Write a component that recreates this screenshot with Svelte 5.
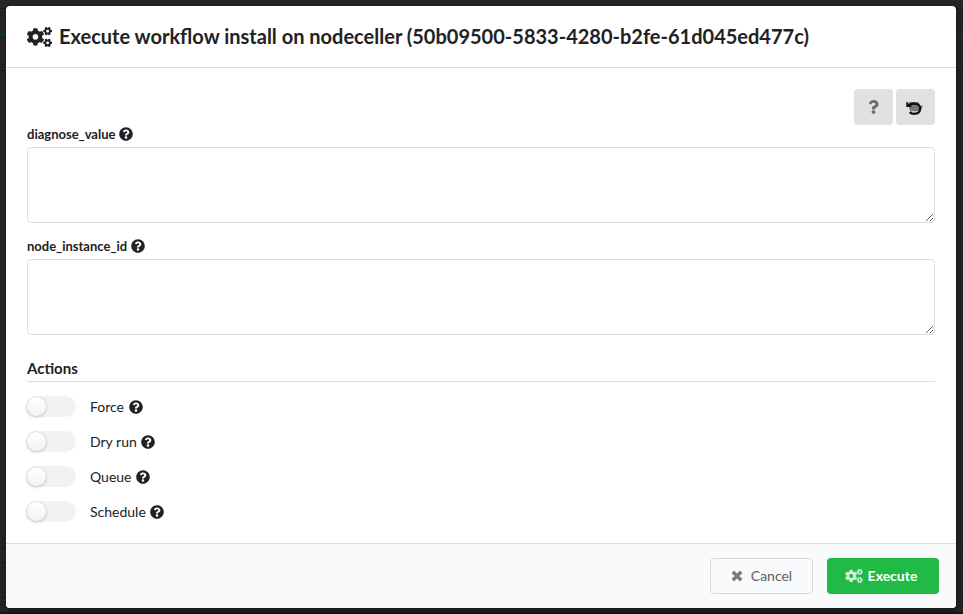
<script>
  const fields = ['diagnose_value', 'node_instance_id'];
  const actions = ['Force', 'Dry run', 'Queue', 'Schedule'];
  const smallGear = 'M512.1 191l-8.2 14.3c-3 5.3-9.4 7.5-15.1 5.4-11.8-4.4-22.6-10.7-32.1-18.6-4.6-3.8-5.8-10.5-2.8-15.7l8.2-14.3c-6.9-8-12.3-17.3-15.9-27.4h-16.5c-6 0-11.2-4.3-12.2-10.3-2-12-2.1-24.6 0-37.1 1-6 6.2-10.4 12.2-10.4h16.5c3.6-10.1 9-19.4 15.9-27.4l-8.2-14.3c-3-5.2-1.9-11.9 2.8-15.7 9.5-7.9 20.4-14.2 32.1-18.6 5.7-2.1 12.1.1 15.1 5.4l8.2 14.3c10.5-1.9 21.2-1.9 31.7 0L552 6.3c3-5.3 9.4-7.5 15.1-5.4 11.8 4.4 22.6 10.7 32.1 18.6 4.6 3.8 5.8 10.5 2.8 15.7l-8.2 14.3c6.9 8 12.3 17.3 15.9 27.4h16.5c6 0 11.2 4.3 12.2 10.3 2 12 2.1 24.6 0 37.1-1 6-6.2 10.4-12.2 10.4h-16.5c-3.6 10.1-9 19.4-15.9 27.4l8.2 14.3c3 5.2 1.9 11.9-2.8 15.7-9.5 7.9-20.4 14.2-32.1 18.6-5.7 2.1-12.1-.1-15.1-5.4l-8.2-14.3c-10.4 1.9-21.2 1.9-31.7 0zm-10.5-58.8c38.5 29.6 82.4-14.3 52.8-52.8-38.5-29.7-82.4 14.3-52.8 52.8z';
  const bigGear = 'M386.3 286.1l33.7 16.8c10.1 5.8 14.5 18.1 10.5 29.1-8.9 24.2-26.4 46.4-42.6 65.8-7.4 8.9-20.2 11.1-30.3 5.3l-29.1-16.8c-16 13.7-34.6 24.6-54.9 31.7v33.6c0 11.6-8.3 21.6-19.7 23.6-24.6 4.2-50.4 4.4-75.9 0-11.5-2-20-11.9-20-23.6V418c-20.3-7.2-38.9-18-54.9-31.7L74 403c-10 5.8-22.9 3.6-30.3-5.3-16.2-19.4-33.3-41.6-42.2-65.7-4-10.9.4-23.2 10.5-29.1l33.3-16.8c-3.9-20.9-3.9-42.4 0-63.4L12 205.8c-10.1-5.8-14.6-18.1-10.5-29 8.9-24.2 26-46.4 42.2-65.8 7.4-8.9 20.2-11.1 30.3-5.3l29.1 16.8c16-13.7 34.6-24.6 54.9-31.7V57.1c0-11.5 8.2-21.5 19.6-23.5 24.6-4.2 50.5-4.4 76-.1 11.5 2 20 11.9 20 23.6v33.6c20.3 7.2 38.9 18 54.9 31.7l29.1-16.8c10-5.8 22.9-3.6 30.3 5.3 16.2 19.4 33.2 41.6 42.1 65.8 4 10.9.1 23.2-10 29.1l-33.7 16.8c3.9 21 3.9 42.5 0 63.5zm-117.6 21.1c59.2-77-28.7-164.9-105.7-105.7-59.2 77 28.7 164.9 105.7 105.7z';
</script>

{#snippet cogs()}
  <svg class="cogs" viewBox="0 0 640 512" fill="currentColor">
    <path d={bigGear} />
    <path d={smallGear} />
    <path d={smallGear} transform="translate(0 299)" />
  </svg>
{/snippet}

{#snippet help()}
  <svg class="help" viewBox="0 0 512 512" fill="currentColor">
    <path d="M504 256c0 136.997-111.043 248-248 248S8 392.997 8 256C8 119.083 119.043 8 256 8s248 111.083 248 248zM262.655 90c-54.497 0-89.255 22.957-116.549 63.758-3.536 5.286-2.353 12.415 2.715 16.258l34.699 26.31c5.205 3.947 12.621 3.008 16.665-2.122 17.864-22.658 30.113-35.797 57.303-35.797 20.429 0 45.698 13.148 45.698 32.958 0 14.976-12.363 22.667-32.534 33.976C247.128 238.528 216 254.941 216 296v4c0 6.627 5.373 12 12 12h56c6.627 0 12-5.373 12-12v-1.333c0-28.462 83.186-29.647 83.186-106.667 0-58.002-60.165-102-116.531-102zM256 338c-25.365 0-46 20.635-46 46 0 25.364 20.635 46 46 46s46-20.636 46-46c0-25.364-20.635-46-46-46z" />
  </svg>
{/snippet}

<div class="dimmer">
  <div class="modal">
    <header>
      {@render cogs()}
      <h1>Execute workflow install on nodeceller (50b09500-5833-4280-b2fe-61d045ed477c)</h1>
    </header>
    <main>
      <div class="tools">
        <button aria-label="Show types">
          <svg width="11" height="14" viewBox="0 0 384 512" fill="#6b6b6c">
            <path d="M202.021 0C122.202 0 70.503 32.703 29.914 91.026c-7.363 10.58-5.093 25.086 5.178 32.874l43.138 32.709c10.373 7.865 25.132 6.026 33.253-4.148 25.049-31.381 43.63-49.449 82.757-49.449 30.764 0 68.816 19.799 68.816 49.631 0 22.552-18.617 34.134-48.993 51.164-35.423 19.86-82.299 44.576-82.299 106.405V320c0 13.255 10.745 24 24 24h72.471c13.255 0 24-10.745 24-24v-5.773c0-42.86 125.268-44.645 125.268-160.627C377.504 66.256 286.902 0 202.021 0zM192 373.459c-38.196 0-69.271 31.075-69.271 69.271 0 38.195 31.075 69.27 69.271 69.27s69.271-31.075 69.271-69.271-31.075-69.27-69.271-69.27z" />
          </svg>
        </button>
        <button aria-label="Restore values">
          <svg width="19" height="18" viewBox="0 0 19 18">
            <path d="M3 4h9l1.5 1.5v2.3h3.7l-3.4 5.4H5L3.2 11z" fill="#777778" />
            <path d="M3.2 7.6C5.2 5.6 7.4 5.2 9.4 5.8a4.9 4.9 0 0 1-.3 9.9c-2.2.4-3.9-.1-5.4-1.5" fill="none" stroke="#111" stroke-width="2.3" />
            <path d="M.3 3.5l1.9 1.6L5.9 8.9.3 9.1z" fill="#111" />
          </svg>
        </button>
      </div>
      {#each fields as name}
        <div class="field">
          <div class="label">{name}{@render help()}</div>
          <textarea aria-label={name}></textarea>
        </div>
      {/each}
      <h2>Actions</h2>
      <div class="actions">
        {#each actions as action}
          <div class="toggle">
            <span class="track"><span class="knob"></span></span>
            <span class="name">{action}</span>{@render help()}
          </div>
        {/each}
      </div>
    </main>
    <footer>
      <button class="cancel">
        <svg width="12" height="12" viewBox="0 0 12 12">
          <path d="M1.8 1.8l8.4 8.4M10.2 1.8L1.8 10.2" stroke="#7c7d7e" stroke-width="3.6" />
        </svg>
        <span>Cancel</span>
      </button>
      <button class="execute">{@render cogs()}<span>Execute</span></button>
    </footer>
  </div>
</div>

<style>
  :global(body) { overflow: hidden; }
  * { box-sizing: border-box; }
  .dimmer {
    width: 963px;
    height: 614px;
    padding: 6px 7px 6px 6px;
    font: 14px/20px Lato, sans-serif;
    color: #212223;
    background:
      linear-gradient(#063f3d, #063f3d) 0 33px / 100% 2px no-repeat,
      linear-gradient(#1c1c1c, #1c1c1c) 0 8px / 100% 1px no-repeat,
      linear-gradient(#1e1e1e, #1e1e1e) 0 70px / 100% 1px no-repeat,
      linear-gradient(#1c1c1c, #1c1c1c) 0 548px / 100% 1px no-repeat,
      linear-gradient(#1c1c1c, #1c1c1c) 0 562px / 100% 1px no-repeat,
      linear-gradient(#1c1c1c, #1c1c1c) 0 597px / 100% 1px no-repeat,
      linear-gradient(#111716, #111716) 0 612px / 100% 2px no-repeat,
      #262626;
  }
  .modal {
    display: flex;
    flex-direction: column;
    width: 950px;
    height: 602px;
    overflow: hidden;
    border-radius: 4px;
    background: #fff;
    box-shadow: 1px 3px 3px #0003, 1px 3px 15px 2px #0003;
  }
  header {
    display: flex;
    align-items: center;
    height: 62px;
    padding: 0 21px;
    border-bottom: 1px solid #dcddde;
  }
  header .cogs { width: 25px; height: 20px; }
  h1 { margin: 0 0 0 7px; padding-bottom: 1px; font-size: 20px; line-height: 26px; font-weight: 700; white-space: nowrap; }
  main { flex: 1; padding: 21px 21px 0; }
  button { font: inherit; padding: 0; border: 0; border-radius: 4px; display: flex; align-items: center; justify-content: center; }
  .tools { display: flex; justify-content: flex-end; gap: 3px; }
  .tools button { width: 39px; height: 36px; background: #e0e1e2; }
  .label { display: flex; align-items: center; height: 18px; margin-bottom: 4px; font-size: 13px; font-weight: 700; }
  .field { height: 98px; margin-bottom: 14px; }
  .help { width: 14px; height: 14px; margin-left: 4px; }
  textarea { display: block; width: 100%; height: 76px; border: 1px solid #dcddde; border-radius: 4px; resize: vertical; background: #fff; outline: 0; }
  h2 { margin: 22px 0 0; height: 25px; border-bottom: 1px solid #dcddde; font-size: 15px; line-height: 22px; font-weight: 700; }
  .actions { display: flex; flex-direction: column; gap: 14px; padding-top: 14px; }
  .toggle { display: flex; align-items: center; height: 21px; }
  .toggle .help { margin-left: 4.6px; }
  .track { width: 49px; height: 21px; margin-right: 14px; border-radius: 11px; background: #f2f2f2; }
  .knob {
    display: block;
    width: 21px;
    height: 21px;
    margin-left: -1px;
    border-radius: 50%;
    background: linear-gradient(transparent, #0000000d) #fff;
    box-shadow: 0 1px 2px #22242626, 0 0 0 1px #22242626 inset;
  }
  footer {
    display: flex;
    justify-content: flex-end;
    gap: 14px;
    height: 65px;
    padding: 14px 17px 0 0;
    border-top: 1px solid #dcddde;
    background: #f9fafb;
  }
  footer button { height: 36px; }
  .cancel { width: 103px; gap: 8px; border: 1px solid #d8d9da; background: transparent; color: #606162; }
  .execute { width: 112px; gap: 5px; padding-right: 4px; background: #21ba45; color: #fff; font-weight: 700; }
  .execute .cogs { width: 18px; height: 14px; opacity: .8; }
</style>
